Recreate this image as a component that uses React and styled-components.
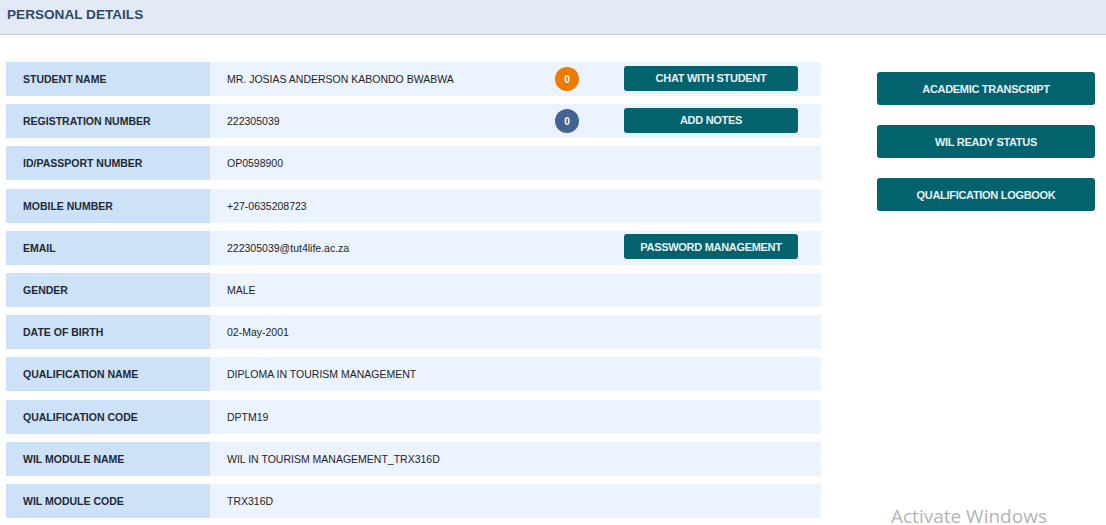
import React from "react";
import styled, { createGlobalStyle } from "styled-components";

const GlobalStyle = createGlobalStyle`
  html, body {
    margin: 0;
    padding: 0;
    background: #ffffff;
    font-family: "Liberation Sans", Arial, sans-serif;
  }
`;

const Page = styled.div`
  position: relative;
  width: 1106px;
  height: 525px;
  overflow: hidden;
  background: #ffffff;
`;

const Header = styled.div`
  height: 35px;
  background: #e3eaf6;
  border-bottom: 1px solid #c5cedb;
  display: flex;
  align-items: center;
  padding: 0 7px 5px;
  box-sizing: border-box;
`;

const Title = styled.h2`
  margin: 0;
  font-size: 13.6px;
  font-weight: bold;
  color: #2e4a6b;
`;

const Body = styled.div`
  display: flex;
  align-items: flex-start;
  padding: 27px 0 0 6px;
`;

const Table = styled.div`
  width: 815px;
  display: flex;
  flex-direction: column;
  gap: 8.2px;
`;

const Row = styled.div`
  display: flex;
  height: 34px;
`;

const Label = styled.div`
  width: 204px;
  flex: none;
  background: #cde1f8;
  display: flex;
  align-items: center;
  padding-left: 17px;
  box-sizing: border-box;
  font-size: 10.5px;
  font-weight: bold;
  color: #1f2a36;
`;

const Value = styled.div`
  flex: 1;
  background: #ebf3fe;
  display: grid;
  grid-template-columns: 1fr 24px 174px;
  column-gap: 45px;
  align-items: center;
  padding: 0 23px 0 17px;
  font-size: 10.5px;
  color: #1f2329;
`;

const Badge = styled.span`
  grid-column: 2;
  width: 24px;
  height: 24px;
  border-radius: 50%;
  background: ${(p) => p.$color};
  color: #ffffff;
  font-size: 10px;
  font-weight: bold;
  display: flex;
  align-items: center;
  justify-content: center;
`;

const SmallButton = styled.button`
  grid-column: 3;
  height: 25px;
  margin-top: -2px;
  border: none;
  border-radius: 3px;
  background: #02636f;
  color: #e9f0f2;
  font-family: inherit;
  font-size: 11px;
  font-weight: bold;
  letter-spacing: -0.3px;
  padding: 0;
  cursor: pointer;
`;

const Side = styled.div`
  margin-left: 56px;
  margin-top: 10px;
  display: flex;
  flex-direction: column;
  gap: 20px;
`;

const SideButton = styled.button`
  width: 218px;
  height: 33px;
  border: none;
  border-radius: 3px;
  background: #02636f;
  color: #e9f0f2;
  font-family: inherit;
  font-size: 11px;
  font-weight: bold;
  letter-spacing: -0.3px;
  cursor: pointer;
`;

const Watermark = styled.div`
  position: absolute;
  left: 891px;
  top: 503px;
  font-family: "Open Sans", "Noto Sans", sans-serif;
  font-size: 19px;
  color: #b4b4b4;
`;

const rows = [
  { label: "STUDENT NAME", value: "MR. JOSIAS ANDERSON KABONDO BWABWA", badge: "#ee7b00", action: "CHAT WITH STUDENT" },
  { label: "REGISTRATION NUMBER", value: "222305039", badge: "#44638e", action: "ADD NOTES" },
  { label: "ID/PASSPORT NUMBER", value: "OP0598900" },
  { label: "MOBILE NUMBER", value: "+27-0635208723" },
  { label: "EMAIL", value: "222305039@tut4life.ac.za", action: "PASSWORD MANAGEMENT" },
  { label: "GENDER", value: "MALE" },
  { label: "DATE OF BIRTH", value: "02-May-2001" },
  { label: "QUALIFICATION NAME", value: "DIPLOMA IN TOURISM MANAGEMENT" },
  { label: "QUALIFICATION CODE", value: "DPTM19" },
  { label: "WIL MODULE NAME", value: "WIL IN TOURISM MANAGEMENT_TRX316D" },
  { label: "WIL MODULE CODE", value: "TRX316D" },
];

export default function App() {
  return (
    <Page>
      <GlobalStyle />
      <Header>
        <Title>PERSONAL DETAILS</Title>
      </Header>
      <Body>
        <Table>
          {rows.map((r) => (
            <Row key={r.label}>
              <Label>{r.label}</Label>
              <Value>
                <span>{r.value}</span>
                {r.badge && <Badge $color={r.badge}>0</Badge>}
                {r.action && <SmallButton>{r.action}</SmallButton>}
              </Value>
            </Row>
          ))}
        </Table>
        <Side>
          <SideButton>ACADEMIC TRANSCRIPT</SideButton>
          <SideButton>WIL READY STATUS</SideButton>
          <SideButton>QUALIFICATION LOGBOOK</SideButton>
        </Side>
      </Body>
      <Watermark>Activate Windows</Watermark>
    </Page>
  );
}
